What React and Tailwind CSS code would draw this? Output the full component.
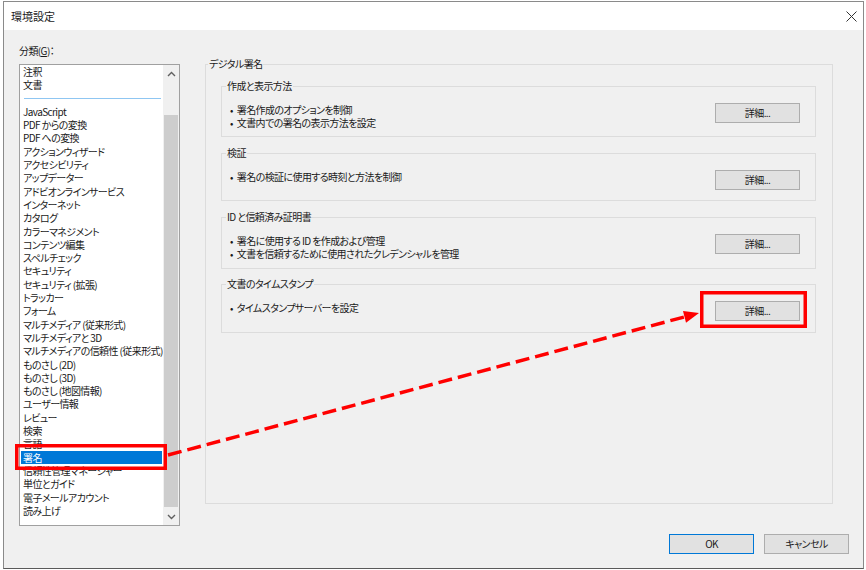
import React from 'react';

const topItems = ['注釈', '文書'];

const items = [
  'JavaScript',
  'PDF からの変換',
  'PDF への変換',
  'アクションウィザード',
  'アクセシビリティ',
  'アップデーター',
  'アドビオンラインサービス',
  'インターネット',
  'カタログ',
  'カラーマネジメント',
  'コンテンツ編集',
  'スペルチェック',
  'セキュリティ',
  'セキュリティ (拡張)',
  'トラッカー',
  'フォーム',
  'マルチメディア (従来形式)',
  'マルチメディアと 3D',
  'マルチメディアの信頼性 (従来形式)',
  'ものさし (2D)',
  'ものさし (3D)',
  'ものさし (地図情報)',
  'ユーザー情報',
  'レビュー',
  '検索',
  '言語',
  '署名',
  '信頼性管理マネージャー',
  '単位とガイド',
  '電子メールアカウント',
  '読み上げ',
];

const groups = [
  { title: '作成と表示方法', lines: ['署名作成のオプションを制御', '文書内での署名の表示方法を設定'], mt: 'mt-[8px]', h: 'h-[43px]' },
  { title: '検証', lines: ['署名の検証に使用する時刻と方法を制御'], mt: 'mt-[9px]', h: 'h-[40px]' },
  { title: 'ID と信頼済み証明書', lines: ['署名に使用する ID を作成および管理', '文書を信頼するために使用されたクレデンシャルを管理'], mt: 'mt-[9px]', h: 'h-[44px]' },
  { title: '文書のタイムスタンプ', lines: ['タイムスタンプサーバーを設定'], mt: 'mt-[8px]', h: 'h-[41px]' },
];

const Chevron = ({ up }) => (
  <svg width="9" height="6" viewBox="0 0 9 6">
    <polyline
      points={up ? '1,5 4.5,1.5 8,5' : '1,1 4.5,4.5 8,1'}
      fill="none"
      stroke="#606060"
      strokeWidth="1.4"
    />
  </svg>
);

const DetailButton = () => (
  <button className="w-[85px] h-[20px] shrink-0 bg-[#e1e1e1] border border-[#adadad] text-[10px] leading-none text-[#1a1a1a]">
    詳細...
  </button>
);

const CategoryList = () => (
  <div className="flex h-[462px] w-[161px] border border-[#a0a0a0] bg-white">
    <div className="flex-1 min-w-0 overflow-hidden leading-[13.3px] text-[10px] text-[#1a1a1a]">
      {topItems.map((t) => (
        <div key={t} className="h-[13.3px] pl-[3px] whitespace-nowrap">{t}</div>
      ))}
      <div className="h-[13.3px] pt-[6px] pl-[4px] pr-[2px]">
        <div className="h-px bg-[#8fc6f2]" />
      </div>
      {items.map((t) =>
        t === '署名' ? (
          <div key={t} className="h-[13.3px] mx-px pl-[2px] bg-[#0078d7] text-white whitespace-nowrap">{t}</div>
        ) : (
          <div key={t} className="h-[13.3px] pl-[3px] whitespace-nowrap">{t}</div>
        )
      )}
    </div>
    <div className="w-[16px] shrink-0 flex flex-col bg-[#f0f0f0]">
      <div className="h-[17px] flex items-center justify-center"><Chevron up /></div>
      <div className="h-[33px]" />
      <div className="h-[392px] mx-[1px] bg-[#cdcdcd]" />
      <div className="flex-1" />
      <div className="h-[17px] flex items-center justify-center"><Chevron /></div>
    </div>
  </div>
);

const Group = ({ title, lines, mt, h }) => (
  <fieldset className={`${mt} ml-[15px] mr-[16px] border border-[#dcdcdc]`}>
    <legend className="ml-[4px] px-[1px] text-[10px] leading-[14px] text-[#1a1a1a]">{title}</legend>
    <div className={`${h} flex items-start justify-between pt-[10px] pl-[8px] pr-[15px]`}>
      <div className="text-[10px] leading-[13px] text-[#1a1a1a]">
        {lines.map((l) => (
          <div key={l} className="whitespace-nowrap">
            <span className="mr-[4px]">•</span>{l}
          </div>
        ))}
      </div>
      <DetailButton />
    </div>
  </fieldset>
);

export default function App() {
  return (
    <div className="relative w-[866px] h-[570px] bg-white overflow-hidden [font-family:'Noto_Sans_CJK_JP',sans-serif] [font-feature-settings:'palt']">
      <div className="ml-[3px] mt-[1px] w-[861px] h-[568px] flex flex-col border border-[#8a8a8a] border-b-[#5a5a5a]">
        <div className="h-[28px] flex items-center justify-between bg-white pl-[7px] pr-[6px]">
          <span className="text-[11px] text-[#1a1a1a]">環境設定</span>
          <svg width="11" height="11" viewBox="0 0 11 11">
            <path d="M0.5 0.5 L10.5 10.5 M10.5 0.5 L0.5 10.5" stroke="#333" strokeWidth="1" />
          </svg>
        </div>
        <div className="flex-1 bg-[#f0f0f0] pt-[14px] pl-[15px] tracking-[-0.6px]">
          <div className="flex">
            <div className="w-[161px] shrink-0">
              <div className="h-[13px] leading-[13px] text-[10px] text-[#1a1a1a]">
                分類(<span className="underline">G</span>)：
              </div>
              <div className="mt-[7px]">
                <CategoryList />
              </div>
            </div>
            <fieldset className="ml-[25px] mt-[13px] w-[628px] h-[447px] border border-[#dcdcdc]">
              <legend className="ml-[2px] px-[1px] text-[10px] leading-[14px] text-[#1a1a1a]">デジタル署名</legend>
              {groups.map((g) => (
                <Group key={g.title} {...g} />
              ))}
            </fieldset>
          </div>
          <div className="mt-[8px] flex justify-end gap-[10px] pr-[14px]">
            <button className="w-[85px] h-[20px] bg-[#e1e1e1] border border-[#0078d7] text-[10px] leading-none text-[#1a1a1a]">OK</button>
            <button className="w-[85px] h-[20px] bg-[#e1e1e1] border border-[#adadad] text-[10px] leading-none text-[#1a1a1a]">キャンセル</button>
          </div>
        </div>
      </div>

      <svg className="absolute inset-0 pointer-events-none" width="866" height="570" viewBox="0 0 866 570">
        <rect x="16.75" y="445.75" width="148.5" height="22.5" fill="none" stroke="#ff0000" strokeWidth="3.5" />
        <rect x="701.75" y="292.75" width="103.5" height="33.5" fill="none" stroke="#ff0000" strokeWidth="3.5" />
        <line x1="168" y1="455" x2="686" y2="316.5" stroke="#ff0000" strokeWidth="3.5" strokeDasharray="14 6" />
        <polygon points="699,313 686,322.7 683,311.1" fill="#ff0000" />
      </svg>
    </div>
  );
}
